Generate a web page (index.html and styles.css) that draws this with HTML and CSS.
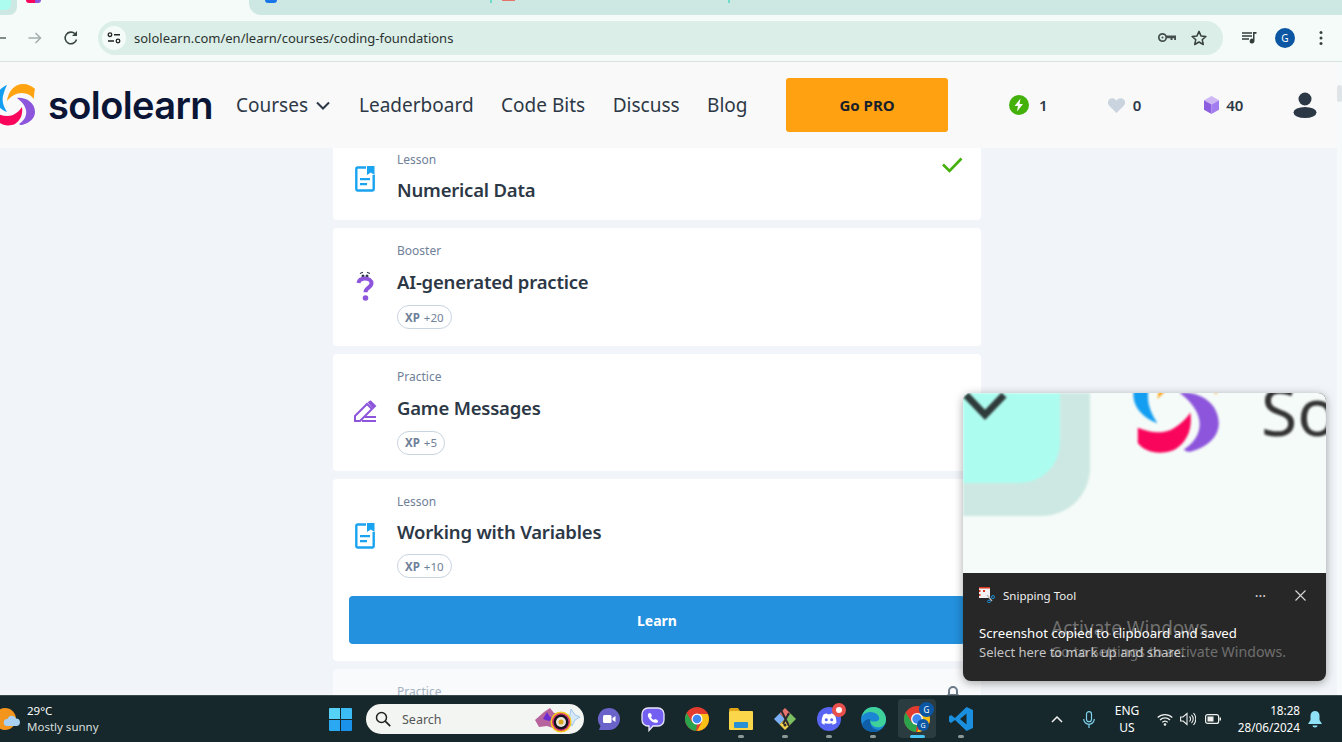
FILE: index.html
```html
<!DOCTYPE html>
<html lang="en">
<head>
    <meta charset="UTF-8">
    <meta name="viewport" content="width=device-width, initial-scale=1.0">
    <title>Sololearn - Coding Foundations</title>
    <link rel="stylesheet" href="styles.css">
</head>
<body>
<svg class="defs" width="0" height="0">
    <symbol id="sl-logo" viewBox="-6 0 42 42">
        <path fill="#ffa310" d="M7 17C8 7 15 0 23 0c5 0 9 2 12 5-1 4-1 7-1 10-3-4-7-6-12-6-6 0-11 3-15 8z"/>
        <path fill="#8c55dc" d="M17 14c8-1 18 4 18 14 0 6-5 11-13 13-1 0-2 0-3-1 6-4 8-9 7-14-1-5-5-9-9-12z"/>
        <path fill="#f9065c" d="M-2 30c5 2 10 3 15 1 4-2 7-5 9-8 1 7-1 13-7 17-7 3-14 1-17-3z"/>
        <path fill="#149ef2" d="M7 1C2 3-4 8-4 15c0 6 5 11 11 13-4-6-5-11-4-16 1-4 2-7 4-11z"/>
    </symbol>
    <symbol id="lesson-icon" viewBox="0 0 20 26">
        <path fill="none" stroke="#1aa3f0" stroke-width="2.4" d="M11 1.500H2.500a1.200 1.200 0 0 0-1.200 1.200v20.600a1.200 1.200 0 0 0 1.200 1.200h15a1.200 1.200 0 0 0 1.200-1.200V9"/>
        <path fill="#1aa3f0" d="M12 0h7.500v9l-3.700-2.600L12 9zM5 12h10v2.200H5zM5 17h7v2.200H5z"/>
    </symbol>
    <symbol id="chrome-icon" viewBox="0 0 24 24">
        <circle cx="12" cy="12" r="12" fill="#e33b2e"/>
        <path fill="#f9c116" d="M12 7h10.900A12 12 0 0 1 12 24l5-9z"/>
        <path fill="#2ba24c" d="M1.600 6 7 15l5 2-1 7A12 12 0 0 1 1.600 6z"/>
        <circle cx="12" cy="12" r="5.500" fill="#fff"/>
        <circle cx="12" cy="12" r="4.300" fill="#3f87f0"/>
    </symbol>
</svg>

<div class="tabstrip">
    <div class="tabstrip-active">
        <span class="tab-prev"><span class="tab-prev-inner"></span></span>
        <span class="tab-favicon"></span>
    </div>
    <div class="tabstrip-rest">
        <span class="tab-bit tab-bit-blue"></span>
        <span class="tab-bit tab-bit-teal"></span>
        <span class="tab-bit tab-bit-red"></span>
        <span class="tab-bit tab-bit-teal tab-bit-last"></span>
    </div>
</div>

<div class="toolbar">
    <svg class="tool-back" width="6" height="14" viewBox="0 0 6 14"><path d="M0 7h6" stroke="#5a6664" stroke-width="1.500"/></svg>
    <svg class="tool-forward" width="16" height="16" viewBox="0 0 16 16"><path d="M1.500 8h12M8.500 3l5 5-5 5" fill="none" stroke="#a3aead" stroke-width="1.500"/></svg>
    <svg class="tool-reload" width="16" height="16" viewBox="0 0 16 16"><path d="M13.500 9.500A5.800 5.800 0 1 1 12 3.800" fill="none" stroke="#3a4644" stroke-width="1.600"/><path d="M14 1v5H9z" fill="#3a4644"/></svg>
    <div class="omnibox">
        <span class="site-info">
            <svg width="14" height="12" viewBox="0 0 14 12"><circle cx="3" cy="2.700" r="1.800" fill="none" stroke="#222" stroke-width="1.300"/><path d="M7 2.700h6M1 9h6" stroke="#222" stroke-width="1.400"/><circle cx="11" cy="9" r="1.800" fill="none" stroke="#222" stroke-width="1.300"/></svg>
        </span>
        <span class="url">sololearn.com/en/learn/courses/coding-foundations</span>
        <svg class="omni-key" width="18" height="11" viewBox="0 0 18 11"><circle cx="4.500" cy="5.500" r="3.700" fill="none" stroke="#444f4d" stroke-width="1.700"/><circle cx="4.500" cy="5.500" r="1" fill="#444f4d"/><path d="M8 3.500h10v4.500h-1.800V6.300h-1.700V8h-2V6.300H8z" fill="#444f4d"/></svg>
        <svg class="omni-star" width="16" height="16" viewBox="0 0 16 16"><path d="M8 1.400l2 4.500 4.900.5-3.700 3.300 1.100 4.800L8 12l-4.300 2.500 1.100-4.800L1.100 6.400 6 5.900z" fill="none" stroke="#38423f" stroke-width="1.500" stroke-linejoin="round"/></svg>
    </div>
    <svg class="tool-media" width="15" height="14" viewBox="0 0 15 14"><path d="M0 2h10M0 5h10M0 8h7" stroke="#333d3b" stroke-width="1.500"/><path d="M11 1h3.500v1.800H12.500V10a2.400 2.400 0 1 1-1.500-2.200z" fill="#333d3b"/></svg>
    <span class="tool-avatar">G</span>
    <svg class="tool-menu" width="4" height="16" viewBox="0 0 4 16"><circle cx="2" cy="2.500" r="1.500" fill="#38423f"/><circle cx="2" cy="8" r="1.500" fill="#38423f"/><circle cx="2" cy="13.500" r="1.500" fill="#38423f"/></svg>
</div>

<div class="page">
    <div class="viewport">
        <header class="site-header">
            <svg class="logo-mark"><use href="#sl-logo"/></svg>
            <span class="wordmark">sololearn</span>
            <nav class="main-nav">
                <a class="nav-link nav-courses">Courses
                    <svg width="14" height="9" viewBox="0 0 14 9"><path d="M1 1.500l6 6 6-6" fill="none" stroke="#2d3846" stroke-width="2"/></svg>
                </a>
                <a class="nav-link">Leaderboard</a>
                <a class="nav-link">Code Bits</a>
                <a class="nav-link">Discuss</a>
                <a class="nav-link">Blog</a>
            </nav>
            <button class="go-pro">Go PRO</button>
            <div class="stat stat-bolt">
                <svg width="20" height="20" viewBox="0 0 20 20"><circle cx="10" cy="10" r="10" fill="#44b10b"/><path d="M11.500 3.500 5.500 11H9l-1 5.500 6-7.500h-3.500z" fill="#fff"/></svg>
                <span>1</span>
            </div>
            <div class="stat stat-heart">
                <svg width="17" height="15" viewBox="0 0 17 15"><path d="M8.500 15 1.200 7.700A4.400 4.400 0 0 1 7.400 1.400l1.100 1.100 1.100-1.100a4.400 4.400 0 0 1 6.200 6.300z" fill="#c9d4de"/></svg>
                <span>0</span>
            </div>
            <div class="stat stat-cube">
                <svg width="15" height="18" viewBox="0 0 15 18"><path d="M7.500 0 15 4.300 7.500 8.600 0 4.300z" fill="#cdb8f3"/><path d="M0 4.300l7.500 4.300V18L0 13.700z" fill="#8c5fe0"/><path d="M15 4.300 7.500 8.600V18l7.500-4.300z" fill="#a27df0"/></svg>
                <span>40</span>
            </div>
            <svg class="user-icon" width="24" height="26" viewBox="0 0 24 26"><circle cx="12" cy="7" r="6.500" fill="#2d3846"/><ellipse cx="12" cy="20.500" rx="11.500" ry="5.500" fill="#2d3846"/></svg>
        </header>

        <main class="course-list">
            <section class="card card-first">
                <div class="card-row">
                    <svg class="card-icon lesson"><use href="#lesson-icon"/></svg>
                    <div class="card-text">
                        <div class="card-type">Lesson</div>
                        <div class="card-title">Numerical Data</div>
                    </div>
                    <svg class="card-check" width="22" height="17" viewBox="0 0 22 17"><path d="M2 8.500l6.500 6.500L20.500 2.500" fill="none" stroke="#44b10b" stroke-width="2.600"/></svg>
                </div>
            </section>
            <section class="card">
                <div class="card-row">
                    <svg class="card-icon" viewBox="0 0 32 32">
                        <path d="M11 3.500l3-1.200M18 2.300l3 1.200" stroke="#2d3846" stroke-width="1.100" fill="none"/>
                        <circle cx="14" cy="6" r="1.500" fill="#2d3846"/><circle cx="18" cy="6" r="1.500" fill="#2d3846"/>
                        <path d="M9.500 13c.5-3 3-4.500 6.500-4.500s6.500 1.800 6.500 4.800c0 4.500-6 4.300-6 9" fill="none" stroke="#8c55dc" stroke-width="4"/>
                        <circle cx="16.500" cy="28" r="2.800" fill="#8c55dc"/>
                    </svg>
                    <div class="card-text">
                        <div class="card-type">Booster</div>
                        <div class="card-title">AI-generated practice</div>
                        <span class="xp-pill"><b>XP</b> +20</span>
                    </div>
                </div>
            </section>
            <section class="card">
                <div class="card-row">
                    <svg class="card-icon" viewBox="-4 -4 32 32">
                        <path d="M2 21v-5L14 4l5 5L7 21zM16 2.500l1.500-1 4.500 4.500-1.500 1.500z" fill="none" stroke="#8c55dc" stroke-width="2"/>
                        <path d="M12 17h11M9 21h14" stroke="#8c55dc" stroke-width="2"/>
                    </svg>
                    <div class="card-text">
                        <div class="card-type">Practice</div>
                        <div class="card-title">Game Messages</div>
                        <span class="xp-pill"><b>XP</b> +5</span>
                    </div>
                </div>
            </section>
            <section class="card card-current">
                <div class="card-row">
                    <svg class="card-icon lesson"><use href="#lesson-icon"/></svg>
                    <div class="card-text">
                        <div class="card-type">Lesson</div>
                        <div class="card-title">Working with Variables</div>
                        <span class="xp-pill"><b>XP</b> +10</span>
                    </div>
                </div>
                <button class="learn-btn">Learn</button>
            </section>
            <section class="card card-locked">
                <div class="card-row">
                    <div class="card-text">
                        <div class="card-type">Practice</div>
                    </div>
                    <svg class="card-lock" width="14" height="18" viewBox="0 0 14 18"><path d="M3 8V5a4 4 0 0 1 8 0v3" fill="none" stroke="#6b7a88" stroke-width="2"/><rect x="1" y="8" width="12" height="10" rx="1.500" fill="#6b7a88"/></svg>
                </div>
            </section>
        </main>
    </div>
    <div class="scrollbar"><span class="scrollbar-thumb"></span></div>

    <!-- toast lies over the page -->
    <aside class="toast">
        <div class="toast-preview">
            <div class="preview-tab"><div class="preview-tab-inner">
                <svg class="preview-chevron" width="44" height="30" viewBox="0 0 44 30"><path d="M3 2l19 20L41 2" fill="none" stroke="#2f3a3a" stroke-width="7"/></svg>
            </div></div>
            <svg class="preview-logo"><use href="#sl-logo"/></svg>
            <span class="preview-word">So</span>
        </div>
        <div class="toast-body">
            <div class="toast-head">
                <svg class="toast-app-icon" width="16" height="16" viewBox="0 0 16 16"><rect x="0" y="0" width="11" height="11" fill="#f2f2f2"/><path d="M0 0h11v1.500H0zM0 3h1.500v2H0zM0 7h1.500v2H0zM4 3h2v2H4z" fill="#d8341e"/><path d="M8 8l5 6" stroke="#bbb" stroke-width="1.200"/><circle cx="14" cy="10" r="1.500" fill="none" stroke="#1e90d8"/><circle cx="10" cy="14.500" r="1.400" fill="none" stroke="#1e90d8"/></svg>
                <span class="toast-app">Snipping Tool</span>
                <span class="toast-more">···</span>
                <svg class="toast-close" width="11" height="11" viewBox="0 0 11 11"><path d="M.5.500l10 10M10.500.500l-10 10" stroke="#d8d8d8" stroke-width="1.100"/></svg>
            </div>
            <div class="toast-line">Screenshot copied to clipboard and saved</div>
            <div class="toast-line toast-sub">Select here to mark up and share.</div>
        </div>
        <div class="watermark">
            <div class="watermark-big">Activate Windows</div>
            <div class="watermark-small">Go to Settings to activate Windows.</div>
        </div>
    </aside>
</div>

<footer class="taskbar">
    <div class="weather">
        <svg class="weather-icon" width="22" height="24" viewBox="0 0 22 24"><circle cx="5" cy="12" r="11" fill="#f3951c"/><path d="M7 19a3.500 3.500 0 0 1 .5-7 4.500 4.500 0 0 1 8.500-.5 3.800 3.800 0 0 1 1 7.500z" fill="#a9d0f0"/></svg>
        <div class="weather-text">
            <div class="weather-temp">29°C</div>
            <div class="weather-desc">Mostly sunny</div>
        </div>
    </div>
    <svg class="win-logo" width="23" height="23" viewBox="0 0 23 23">
        <path fill="#57d2f7" d="M0 1a1 1 0 0 1 1-1h10v11H0z"/><path fill="#3bbcf5" d="M12 0h10a1 1 0 0 1 1 1v10H12z"/>
        <path fill="#2aa8f2" d="M0 12h11v11H1a1 1 0 0 1-1-1z"/><path fill="#1a92ea" d="M12 12h11v10a1 1 0 0 1-1 1H12z"/>
    </svg>
    <div class="searchbox">
        <svg width="16" height="16" viewBox="0 0 16 16"><circle cx="6.500" cy="6.500" r="5" fill="none" stroke="#222" stroke-width="1.500"/><path d="M10.200 10.200l5 5" stroke="#222" stroke-width="1.700"/></svg>
        <span class="search-label">Search</span>
        <svg class="search-art" width="50" height="28" viewBox="0 0 50 28">
            <path d="M2 15 11 7l6-4 4 5 10 1-6 7 1 9-12-4-8 1z" fill="#b7649e"/>
            <path d="M10 14l4-7 3 5 6 1-7 3z" fill="#6c2bd0"/>
            <path d="M38 4l4 6 5 2-5 3-3 6-3-6z" fill="#d7e8f6" stroke="#9fc6ea"/>
            <circle cx="28" cy="17" r="10.500" fill="#f2c81f"/><circle cx="28" cy="17" r="9" fill="#d9366e"/><circle cx="28" cy="17" r="7.500" fill="#171420"/><circle cx="28" cy="17" r="5" fill="#e8e4da"/><circle cx="28" cy="17" r="2.500" fill="#d8a51c"/>
        </svg>
    </div>
    <div class="task-icons">
        <span class="task-item">
            <svg width="24" height="24" viewBox="0 0 24 24"><path d="M12 1a11 11 0 0 1 0 22H2l1.500-4A11 11 0 0 1 12 1z" fill="#6a63c9"/><rect x="6" y="8" width="8.500" height="8" rx="1.500" fill="#fff"/><path d="M15.500 11l3-2v6l-3-2z" fill="#fff"/></svg>
        </span>
        <span class="task-item">
            <svg width="24" height="25" viewBox="0 0 24 25"><path d="M7 1h10a6 6 0 0 1 6 6v6a6 6 0 0 1-6 6h-5l-4 4.500V19H7a6 6 0 0 1-6-6V7a6 6 0 0 1 6-6z" fill="#7360f2" stroke="#e9e6fb" stroke-width="1.300"/><path d="M8 6l2 .5 1 2.500-1 1c.5 1.500 1.700 2.500 3 3l1-1 2.500 1 .5 2c-1 1-2.500 1-4 .5C10 14.500 8 12 7 9.500c-.3-1.500 0-2.500 1-3.500z" fill="#fff"/></svg>
        </span>
        <span class="task-item">
            <svg width="24" height="24"><use href="#chrome-icon"/></svg>
        </span>
        <span class="task-item is-open">
            <svg width="24" height="22" viewBox="0 0 24 22"><path d="M0 2a2 2 0 0 1 2-2h7l2 3H0z" fill="#e0a418"/><rect y="3" width="24" height="19" rx="1" fill="#fbd54a"/><rect x="5" y="14" width="14" height="6" rx="1" fill="#2b8fd6"/></svg>
        </span>
        <span class="task-item is-open">
            <svg width="24" height="24" viewBox="0 0 24 24"><path d="M12 1l5.500 5.500L12 12 6.500 6.500z" fill="#e8736b"/><path d="M1 12l5.500-5.500L12 12l-5.500 5.500z" fill="#7baff5"/><path d="M23 12l-5.500 5.500L12 12l5.500-5.500z" fill="#7cbf63"/><path d="M12 23l-5.500-5.500L12 12l5.500 5.500z" fill="#f5d24c"/><path d="M8 3l8 16M16 6l-6 11" stroke="#2a2a30" stroke-width="2"/><circle cx="12" cy="18" r="1.500" fill="#2a2a30"/></svg>
        </span>
        <span class="task-item is-open">
            <svg width="24" height="24" viewBox="0 0 24 24"><circle cx="12" cy="12" r="12" fill="#5865f2"/><path d="M6.500 7.500C8 6.700 9.500 6.400 10 6.400l.4.800h3.200l.4-.8c.6 0 2 .3 3.500 1.100 1.500 2.800 2 5.500 1.900 8.500-1.300.9-2.500 1.400-3.700 1.700l-.8-1.300c.5-.2 1-.4 1.400-.7-2.800 1.300-6.800 1.300-9.600 0 .4.300.9.500 1.400.7l-.8 1.300C6.500 17.400 5.400 16.900 4.600 16c-.1-3 .4-5.700 1.900-8.500z" fill="#fff"/><circle cx="9.300" cy="12.700" r="1.500" fill="#5865f2"/><circle cx="14.700" cy="12.700" r="1.500" fill="#5865f2"/></svg>
            <span class="task-badge"></span>
        </span>
        <span class="task-item is-open">
            <svg width="25" height="25" viewBox="0 0 24 24"><circle cx="12" cy="12" r="12" fill="#1b86d4"/><path d="M24 12c0-5-4-12-12-12C6 0 2 4 1 9c2-3 6-4.500 9.500-4 4.500.5 7 3.500 7 6 0 2-2 3-4.500 3-3 0-4-1-4.500-2-.5 4 3.500 7.500 8 7.500 4.500 0 7.500-3 7.500-7.500z" fill="#3fd19a"/><path d="M9 12c-3-1-7 1-8 6 2 4 6 6 11 6 3 0 5-1 6-2-5 .5-10-3-9-10z" fill="#0f5fa8"/></svg>
        </span>
        <span class="task-item is-active">
            <svg width="26" height="26"><use href="#chrome-icon"/></svg>
            <span class="task-avatar task-avatar-big">G</span>
            <span class="task-avatar task-avatar-small">G</span>
        </span>
        <span class="task-item is-open">
            <svg width="24" height="24" viewBox="0 0 24 24"><path d="M17.500 0 24 3v18l-6.500 3L6 13l-4 3-2-1.500V9.500L2 8l4 3zM17.500 6.500 11 12l6.500 5.500z" fill="#1a8fe0"/></svg>
        </span>
    </div>
    <div class="tray">
        <svg class="tray-chevron" width="12" height="7" viewBox="0 0 12 7"><path d="M1 6l5-5 5 5" fill="none" stroke="#eee" stroke-width="1.500"/></svg>
        <svg class="tray-mic" width="12" height="17" viewBox="0 0 12 17"><rect x="3.500" y=".7" width="5" height="10" rx="2.500" fill="none" stroke="#7fd3ee" stroke-width="1.200"/><path d="M.7 8a5.300 5.300 0 0 0 10.600 0M6 13.500V17" fill="none" stroke="#7fd3ee" stroke-width="1.200"/></svg>
        <div class="tray-lang">ENG<br>US</div>
        <svg class="tray-wifi" width="16" height="13" viewBox="0 0 16 13"><path d="M.7 4.500a10.500 10.500 0 0 1 14.600 0M3 7a7 7 0 0 1 10 0M5.300 9.300a3.500 3.500 0 0 1 5.400 0" fill="none" stroke="#eee" stroke-width="1.300"/><circle cx="8" cy="11.500" r="1.300" fill="#eee"/></svg>
        <svg class="tray-volume" width="16" height="14" viewBox="0 0 16 14"><path d="M.6 5v4h2.500L7 12.500v-11L3 5z" fill="none" stroke="#eee" stroke-width="1.100"/><path d="M9.500 4.500a3.500 3.500 0 0 1 0 5M11.500 2.800a6 6 0 0 1 0 8.400M13.500 1a9 9 0 0 1 0 12" fill="none" stroke="#eee" stroke-width="1.100"/></svg>
        <svg class="tray-battery" width="16" height="10" viewBox="0 0 16 10"><rect x=".6" y=".6" width="13" height="8.800" rx="2" fill="none" stroke="#eee" stroke-width="1.200"/><rect x="2.500" y="2.500" width="6" height="5" fill="#eee"/><rect x="14.500" y="3.500" width="1.500" height="3" fill="#eee"/></svg>
        <div class="tray-clock">18:28<br>28/06/2024</div>
        <svg class="tray-bell" width="14" height="17" viewBox="0 0 14 17"><path d="M7 0a4.500 4.500 0 0 1 4.500 4.500V9l2.500 4H0l2.500-4V4.500A4.500 4.500 0 0 1 7 0z" fill="#8fe1f7"/><path d="M4.500 14.500h5a2.500 2 0 0 1-5 0z" fill="#8fe1f7"/></svg>
    </div>
</footer>
</body>
</html>
```
FILE: styles.css
```css
* {
    box-sizing: border-box;
}
html, body {
    margin: 0;
    height: 742px;
    overflow: hidden;
}
body {
    width: 1342px;
    display: flex;
    flex-direction: column;
    font-family: "Noto Sans", sans-serif;
    background: #f1f4f8;
}
.defs {
    position: absolute;
}

/* browser chrome */
.tabstrip {
    height: 15px;
    display: flex;
    background: #f5fbf8;
    flex: none;
}
.tabstrip-active {
    width: 249px;
    display: flex;
    align-items: flex-start;
}
.tab-prev {
    width: 17px;
    height: 15px;
    background: #cde8e2;
    border-bottom-right-radius: 8px;
}
.tab-prev-inner {
    display: block;
    width: 11px;
    height: 10px;
    background: #adfcf0;
    border-bottom-right-radius: 6px;
}
.tab-favicon {
    width: 15px;
    height: 3px;
    margin-left: 9px;
    background: linear-gradient(90deg, #f9065c 60%, #8c55dc 60%);
    border-radius: 0 0 8px 8px;
}
.tabstrip-rest {
    flex: 1;
    display: flex;
    align-items: flex-start;
    background: #cde8e2;
    border-bottom-left-radius: 12px;
}
.tab-bit {
    height: 3px;
}
.tab-bit-blue {
    width: 12px;
    margin-left: 16px;
    background: #1976e8;
    border-radius: 0 0 6px 6px;
}
.tab-bit-teal {
    width: 2px;
    margin-left: 213px;
    background: #6fdccb;
}
.tab-bit-red {
    width: 13px;
    height: 1px;
    margin-left: 10px;
    background: #e8736b;
}
.tab-bit-last {
    margin-left: 213px;
}
.toolbar {
    height: 47px;
    flex: none;
    display: flex;
    align-items: center;
    padding-bottom: 1px;
    background: #f5fbf8;
    border-bottom: 1px solid #d6e3df;
}
.tool-forward {
    margin-left: 21px;
}
.tool-reload {
    margin-left: 20px;
}
.omnibox {
    width: 1125px;
    height: 34px;
    margin-left: 19px;
    padding: 0 16px 0 4px;
    display: flex;
    align-items: center;
    background: #dbeee8;
    border-radius: 17px;
    flex: none;
}
.site-info {
    width: 24px;
    height: 24px;
    display: flex;
    align-items: center;
    justify-content: center;
    background: #f5fbf8;
    border-radius: 50%;
}
.url {
    margin-left: 8px;
    font-size: 13px;
    color: #2b3331;
    flex: 1;
}
.omni-star {
    margin-left: 15px;
}
.tool-media {
    margin-left: 19px;
}
.tool-avatar {
    width: 20px;
    height: 20px;
    margin-left: 18px;
    display: flex;
    align-items: center;
    justify-content: center;
    font-size: 10px;
    color: #fff;
    background: #0b57a4;
    border-radius: 50%;
}
.tool-menu {
    margin-left: 24px;
}

/* page */
.page {
    flex: 1;
    min-height: 0;
    display: flex;
    position: relative;
}
.viewport {
    flex: 1;
    min-width: 0;
    overflow: hidden;
}
.scrollbar {
    width: 5px;
    background: #f7fafb;
    padding-top: 23px;
}
.scrollbar-thumb {
    display: block;
    height: 17px;
    background: #dfe4e8;
    border-radius: 3px;
}
.site-header {
    height: 86px;
    display: flex;
    align-items: center;
    background: #f9f9f9;
    color: #2d3846;
}
.logo-mark {
    width: 42px;
    height: 42px;
    margin-left: -6px;
    flex: none;
}
.wordmark {
    margin-left: 12px;
    font-family: Inter, sans-serif;
    font-size: 38px;
    font-weight: 600;
    letter-spacing: -.6px;
    line-height: 40px;
    color: #0b1536;
}
.main-nav {
    display: flex;
    align-items: center;
    gap: 27.500px;
    margin-left: 23px;
}
.nav-link {
    font-size: 19px;
    color: #2d3846;
}
.nav-courses {
    display: flex;
    align-items: center;
    gap: 8px;
    margin-right: 1.500px;
}
.go-pro {
    width: 162px;
    height: 54px;
    margin-left: 38.500px;
    border: none;
    border-radius: 3px;
    background: #ffa110;
    font-family: "Noto Sans", sans-serif;
    font-size: 15px;
    font-weight: 700;
    color: #17202b;
}
.stat {
    display: flex;
    align-items: center;
    font-size: 15px;
    font-weight: 600;
    color: #2d3846;
}
.stat-bolt {
    gap: 10px;
    margin-left: 61px;
}
.stat-heart {
    gap: 8px;
    margin-left: 60px;
}
.stat-cube {
    gap: 7px;
    margin-left: 63px;
}
.user-icon {
    margin-left: 50px;
}
.course-list {
    width: 648px;
    margin-left: 333px;
    display: flex;
    flex-direction: column;
    gap: 8px;
}
.card {
    background: #fff;
    border-radius: 4px;
    padding: 15px 16px 16.500px;
}
.card-first {
    padding-top: 4px;
    padding-bottom: 15px;
    border-radius: 0 0 4px 4px;
}
.card-first .card-type, .card-current .card-type {
    margin-bottom: 7px;
}
.card-row {
    display: flex;
    align-items: center;
}
.card-icon {
    width: 32px;
    height: 32px;
    flex: none;
    margin-right: 16px;
}
.card-icon.lesson {
    height: 26px;
}
.card-text {
    flex: 1;
}
.card-type {
    font-size: 12px;
    line-height: 16px;
    margin-bottom: 8px;
    color: #6f8099;
}
.card-title {
    font-size: 18.500px;
    font-weight: 600;
    letter-spacing: -.2px;
    line-height: 30px;
    margin-bottom: 8px;
    color: #2d3846;
}
.card-first .card-title {
    margin-bottom: 0;
}
.card-current .card-title {
    margin-bottom: 7px;
}
.card-check {
    align-self: flex-start;
    margin-top: 4px;
    margin-right: 2px;
}
.xp-pill {
    display: flex;
    align-items: center;
    gap: 4px;
    width: fit-content;
    height: 24px;
    padding: 0 7px;
    border: 1px solid #c8d4df;
    border-radius: 12px;
    font-size: 11.500px;
    color: #6f8099;
}
.xp-pill b {
    font-weight: 700;
}
.learn-btn {
    display: block;
    width: 100%;
    height: 48px;
    margin-top: 18px;
    border: none;
    border-radius: 4px;
    background: #2391de;
    color: #fff;
    font-family: "Noto Sans", sans-serif;
    font-size: 14px;
    font-weight: 700;
}
.card-locked {
    background: #f9fafc;
    padding-left: 64px;
}
.card-locked .card-type {
    color: #a4b1c2;
}
.card-lock {
    margin-top: 2px;
    margin-right: 5px;
    align-self: flex-start;
}

/* notification */
.toast {
    position: absolute;
    left: 963px;
    top: 331px;
    width: 363px;
    height: 288px;
    border-radius: 8px;
    overflow: hidden;
    background: #272727;
    box-shadow: 0 2px 10px rgba(0, 0, 0, .35);
}
.toast-preview {
    height: 180px;
    position: relative;
    overflow: hidden;
    background: #f5fbf8;
}
.preview-tab {
    width: 127px;
    height: 123px;
    padding-right: 30px;
    padding-bottom: 33px;
    background: #cde8e2;
    border-bottom-right-radius: 48px;
    filter: blur(1.200px);
}
.preview-tab-inner {
    height: 100%;
    background: #adfcf0;
    border-bottom-right-radius: 40px;
}
.preview-chevron {
    display: block;
}
.preview-logo {
    position: absolute;
    left: 166px;
    top: -31px;
    width: 92px;
    height: 92px;
    filter: blur(1.200px);
}
.preview-word {
    position: absolute;
    left: 298px;
    top: -28px;
    font-size: 66px;
    line-height: 90px;
    color: #333;
    filter: blur(1.200px);
}
.toast-body {
    padding: 14px 16px;
    color: #fff;
}
.toast-head {
    display: flex;
    align-items: center;
    height: 16px;
    margin-bottom: 21px;
}
.toast-app {
    margin-left: 8px;
    font-size: 11.500px;
    flex: 1;
    color: #f0f0f0;
}
.toast-more {
    font-size: 14px;
    color: #d8d8d8;
    margin-right: 29px;
}
.toast-close {
    margin-right: 4px;
}
.toast-line {
    font-size: 13.200px;
    line-height: 19px;
    white-space: nowrap;
}
.toast-sub {
    font-size: 13px;
    color: #c4c4c4;
}
.watermark {
    position: absolute;
    left: 88px;
    top: 223px;
    color: rgba(255, 255, 255, .34);
    pointer-events: none;
}
.watermark-big {
    font-size: 19px;
    line-height: 25px;
}
.watermark-small {
    font-size: 14.200px;
    line-height: 22px;
}

/* windows taskbar */
.taskbar {
    height: 47px;
    flex: none;
    display: flex;
    align-items: center;
    background: #16282b;
    border-top: 1px solid #39484a;
    color: #fff;
    font-size: 11.500px;
    position: relative;
}
.weather {
    width: 329px;
    display: flex;
    align-items: center;
}
.weather-icon {
    margin-right: 5px;
    flex: none;
}
.weather-temp, .weather-desc {
    line-height: 16px;
}
.weather-desc {
    color: #d9dfdf;
}
.win-logo {
    flex: none;
}
.searchbox {
    width: 218px;
    height: 30px;
    margin-left: 14px;
    padding-left: 9px;
    display: flex;
    align-items: center;
    background: #f3f5f3;
    border-radius: 15px;
    flex: none;
}
.search-label {
    margin-left: 11px;
    font-size: 12.500px;
    color: #555;
    flex: 1;
}
.search-art {
    margin-right: 1px;
}
.task-icons {
    display: flex;
    margin-left: 3px;
    height: 100%;
}
.task-item {
    width: 44px;
    display: flex;
    align-items: center;
    justify-content: center;
    position: relative;
}
.task-item.is-open::after {
    content: "";
    position: absolute;
    left: 19px;
    bottom: 4px;
    width: 6px;
    height: 3px;
    background: #8d9898;
    border-radius: 2px;
}
.task-item.is-active {
    background: #2a3c3f;
    width: 38px;
    margin: 3px 3px 4px;
    border-radius: 4px;
}
.task-item.is-active::after {
    content: "";
    position: absolute;
    left: 12px;
    bottom: 0;
    width: 15px;
    height: 3px;
    background: #48c4f2;
    border-radius: 2px;
}
.task-badge {
    position: absolute;
    right: 5px;
    top: 7px;
    width: 14px;
    height: 14px;
    background: #fff;
    border: 4px solid #e8504c;
    border-radius: 50%;
}
.task-avatar {
    position: absolute;
    display: flex;
    align-items: center;
    justify-content: center;
    border-radius: 50%;
    background: #0b57a4;
    color: #fff;
}
.task-avatar-big {
    width: 15px;
    height: 15px;
    right: 2px;
    top: 3px;
    font-size: 8px;
}
.task-avatar-small {
    width: 12px;
    height: 12px;
    right: 7px;
    bottom: 7px;
    font-size: 7px;
}
.tray {
    display: flex;
    align-items: center;
    margin-left: 68px;
    height: 100%;
}
.tray-mic {
    margin-left: 20px;
}
.tray-lang {
    width: 40px;
    margin-left: 12px;
    text-align: center;
    font-size: 12px;
    line-height: 17px;
}
.tray-wifi {
    margin-left: 10px;
}
.tray-volume {
    margin-left: 7px;
}
.tray-battery {
    margin-left: 9px;
}
.tray-clock {
    width: 79px;
    text-align: right;
    font-size: 11.700px;
    line-height: 17px;
}
.tray-bell {
    margin-left: 8px;
}
```
